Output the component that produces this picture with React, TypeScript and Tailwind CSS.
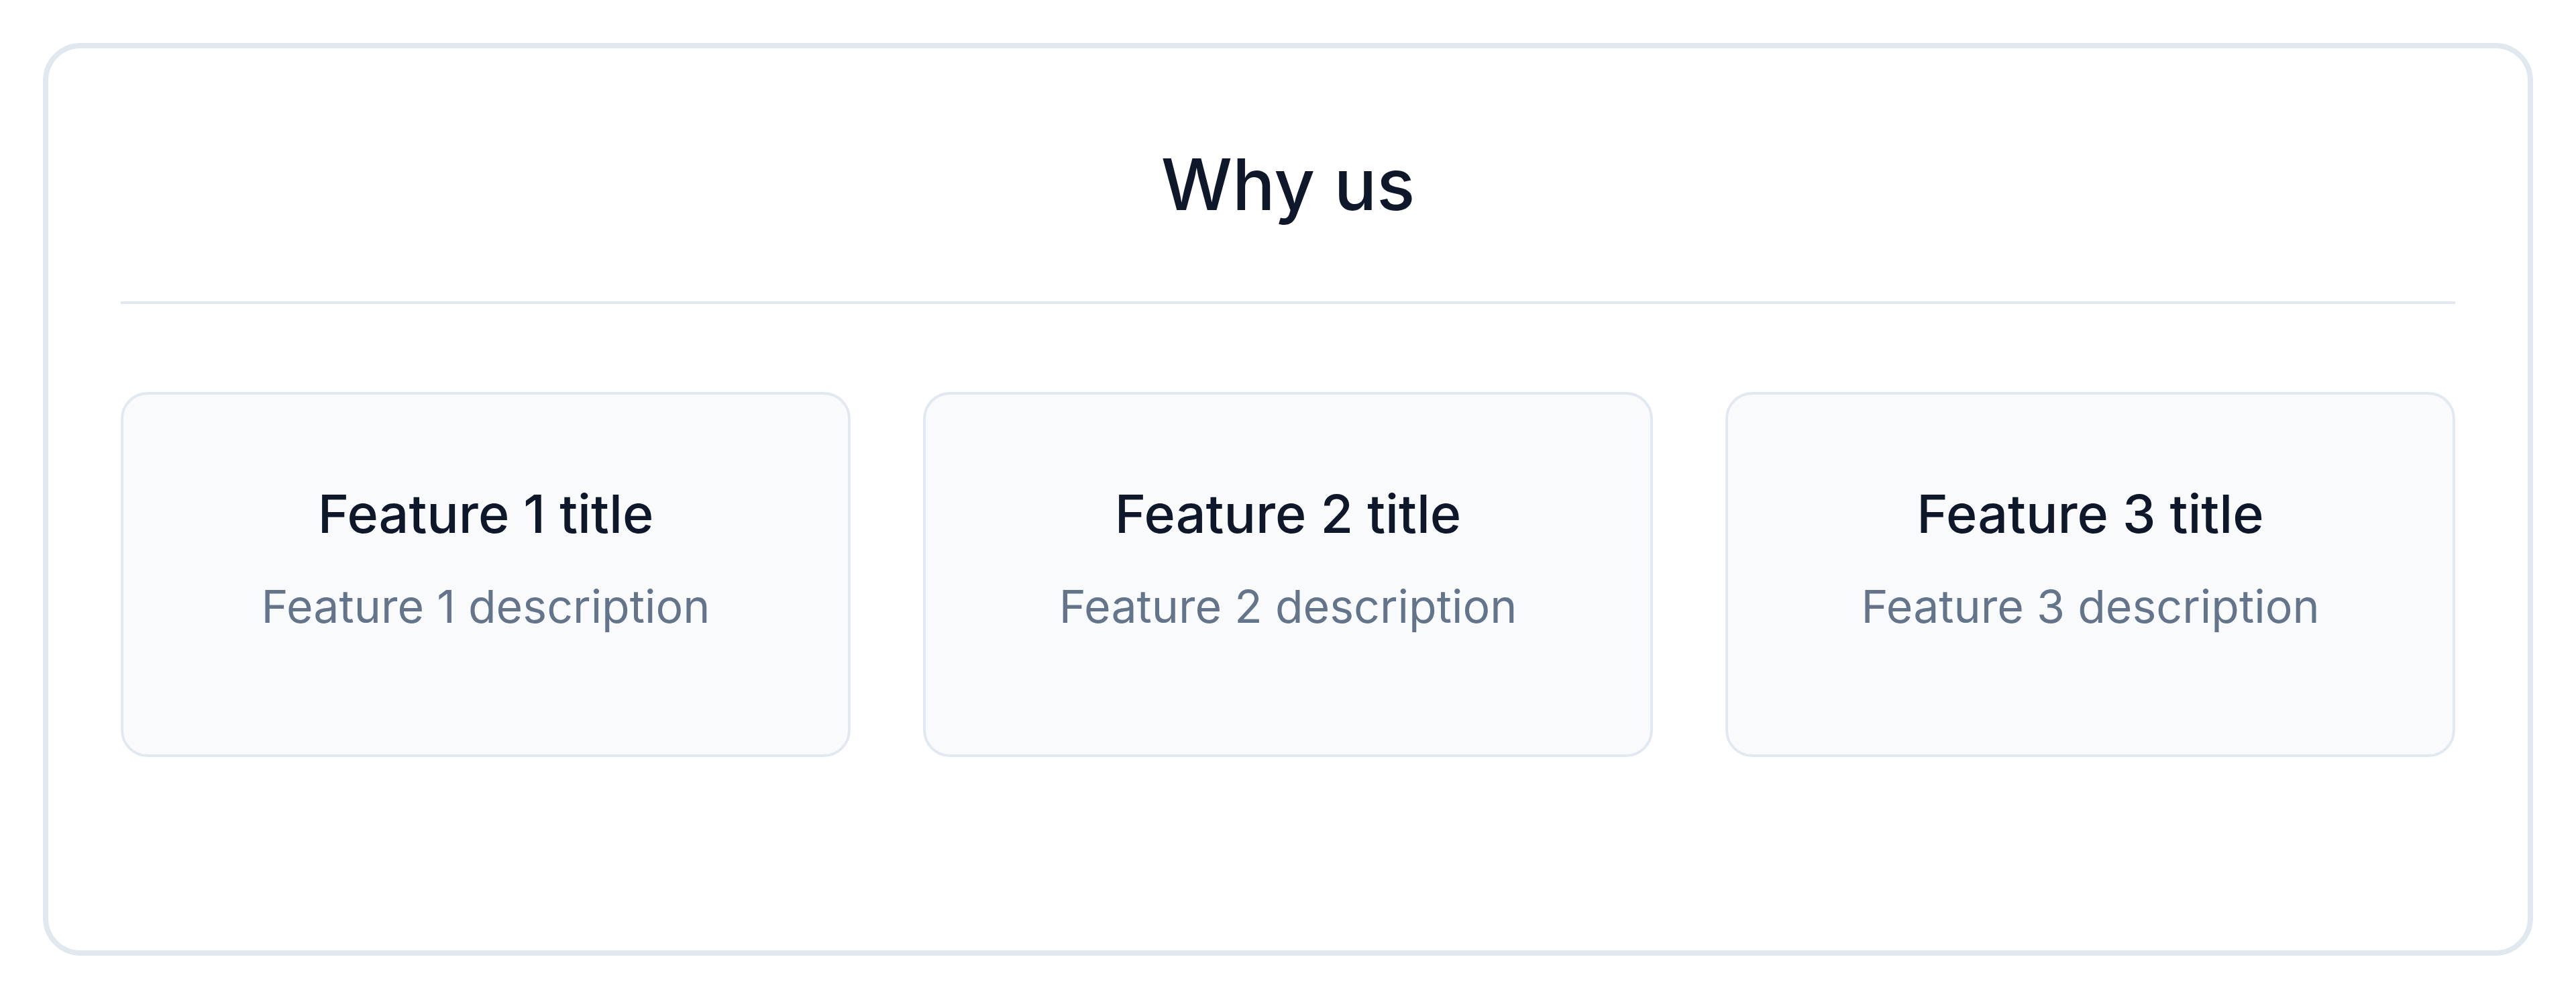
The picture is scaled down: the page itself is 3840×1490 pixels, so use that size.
const features = [1, 2, 3].map((n) => ({
  title: `Feature ${n} title`,
  description: `Feature ${n} description`,
}))

function FeatureCard({ title, description }: { title: string; description: string }) {
  return (
    <div className="h-[544px] rounded-[40px] border-[4px] border-[#e2e8f0] bg-[#f8fafc] pt-[130px] text-center">
      <h3 className="text-[79px] leading-[1.2] font-medium text-[#0f172a]">{title}</h3>
      <p className="mt-[50px] text-[68px] leading-[1.2] text-[#64748b]">{description}</p>
    </div>
  )
}

export default function App() {
  return (
    <div className="bg-white p-[64px] font-['Inter','Liberation_Sans',sans-serif]">
      <section className="rounded-[56px] border-[8px] border-[#e2e8f0] bg-white px-[108px] pt-[139px] pb-[288px]">
        <h2 className="text-center text-[106px] leading-[1.2] font-medium text-[#0f172a]">Why us</h2>
        <div className="mt-[111px] h-[4px] bg-[#e2e8f0]" />
        <div className="mt-[131px] grid grid-cols-3 gap-[108px]">
          {features.map((f) => (
            <FeatureCard key={f.title} title={f.title} description={f.description} />
          ))}
        </div>
      </section>
    </div>
  )
}
